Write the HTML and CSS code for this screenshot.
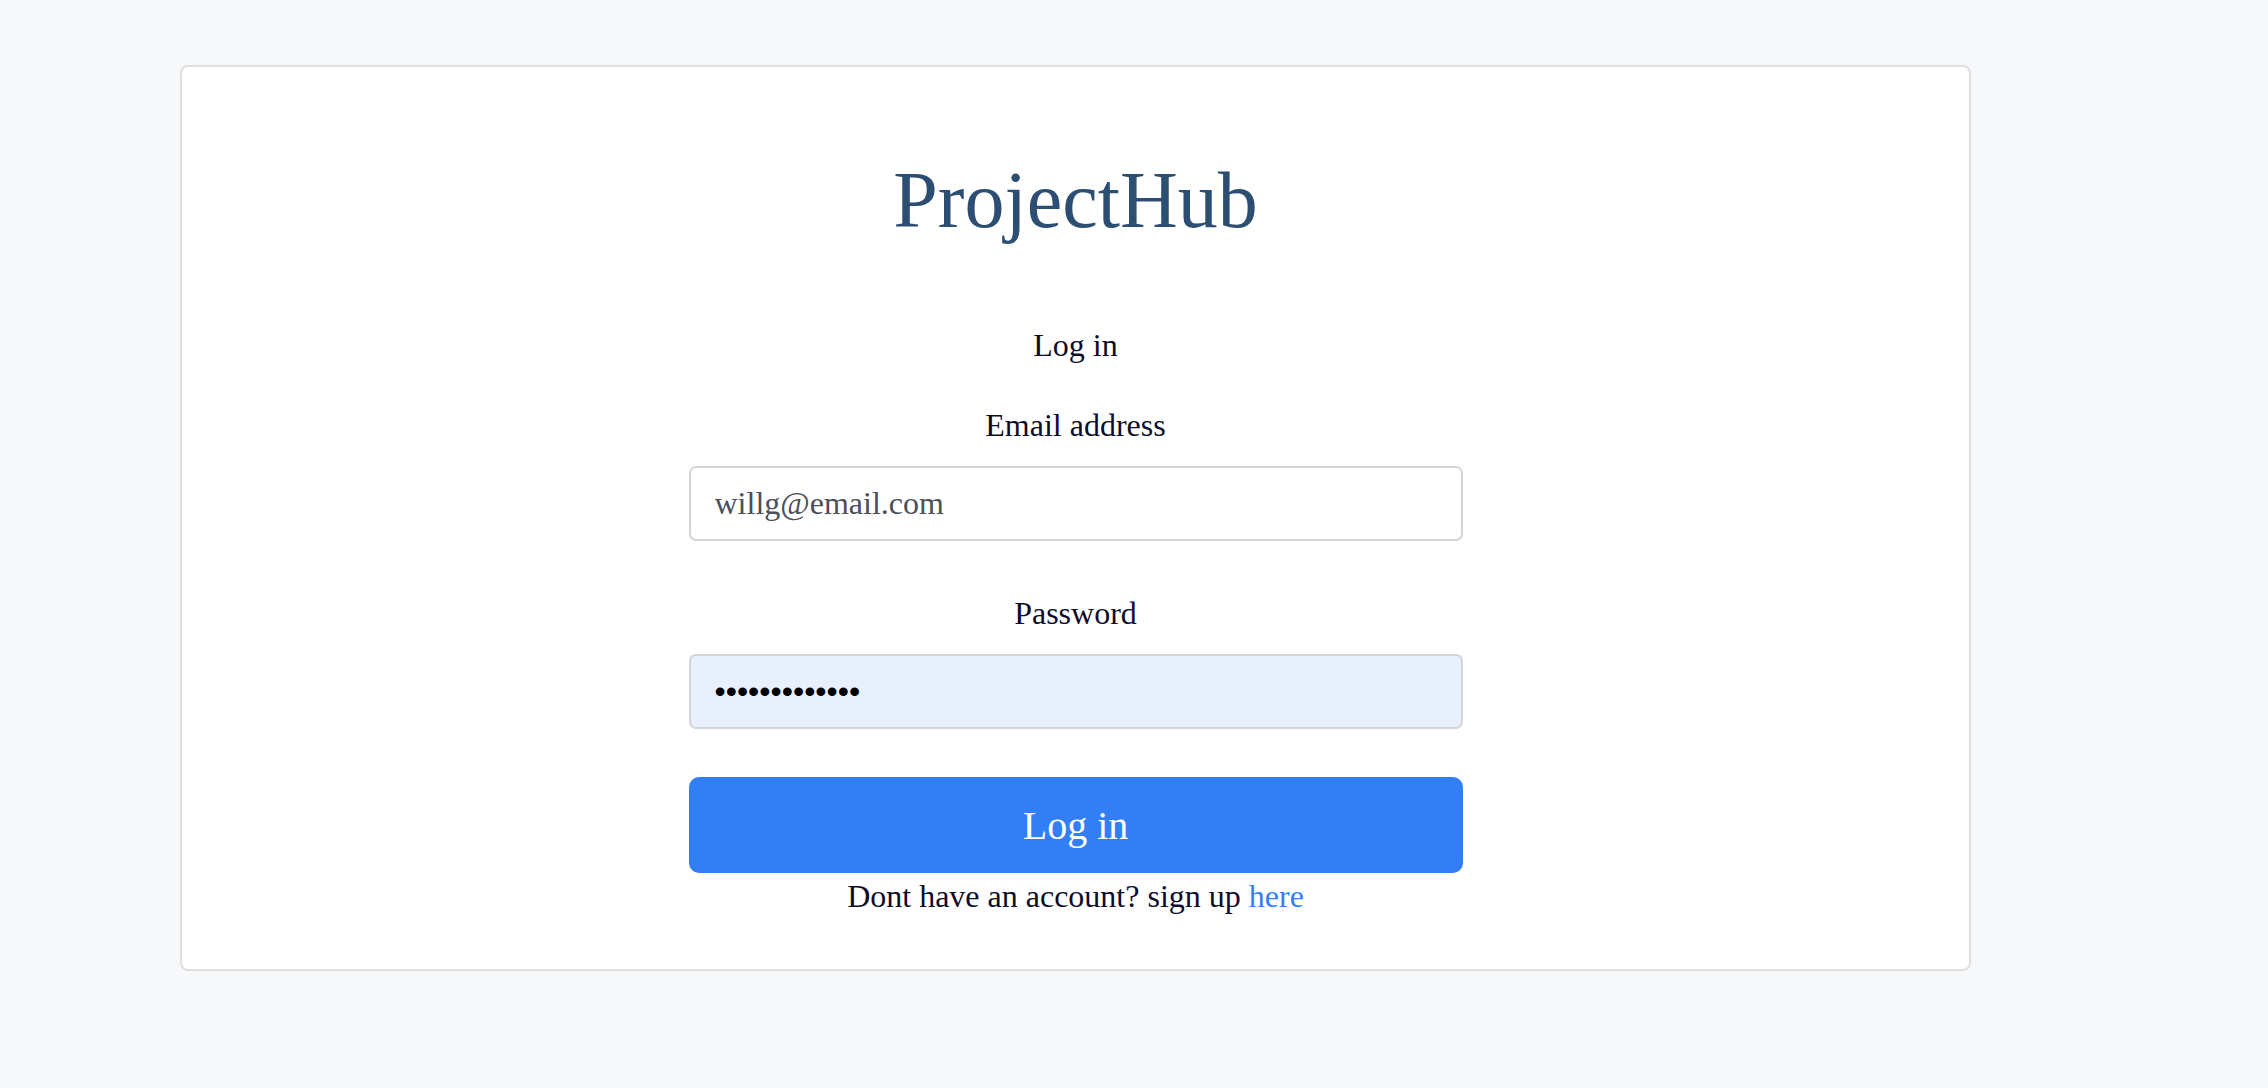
FILE: index.html
```html
<!DOCTYPE html>
<html lang="en">
<head>
<meta charset="utf-8">
<title>ProjectHub – Log in</title>
<link rel="stylesheet" href="styles.css">
</head>
<body>
  <main class="card">
    <h1 class="brand">ProjectHub</h1>
    <form class="login-form" onsubmit="return false;">
      <h2 class="form-title">Log in</h2>
      <div class="field">
        <label class="field-label" for="email">Email address</label>
        <input class="field-input" id="email" type="email" value="willg@email.com">
      </div>
      <div class="field field-password">
        <label class="field-label" for="password">Password</label>
        <input class="field-input field-autofill" id="password" type="password" value="password12345">
      </div>
      <button class="submit-btn" type="submit">Log in</button>
      <p class="signup-note">Dont have an account? sign up <a class="signup-link" href="#">here</a></p>
    </form>
  </main>
</body>
</html>
```
FILE: styles.css
```css
* {
  box-sizing: border-box;
}

html, body {
  margin: 0;
  padding: 0;
}

body {
  background: #f7f8fa;
  font-family: "Liberation Serif", "Times New Roman", serif;
  color: #0d0d2b;
  padding: 65px 0 0 180px;
}

.card {
  width: 1791px;
  height: 906px;
  background: #ffffff;
  border: 2px solid #dedfe1;
  border-radius: 8px;
  display: flex;
  flex-direction: column;
  align-items: center;
  padding-top: 85px;
}

.brand {
  margin: 0;
  font-weight: 400;
  font-size: 80px;
  line-height: 96px;
  color: #2c4e72;
}

.login-form {
  width: 774px;
  display: flex;
  flex-direction: column;
  align-items: center;
}

.form-title {
  margin: 79px 0 0;
  font-weight: 400;
  font-size: 32px;
  line-height: 36px;
}

.field {
  width: 100%;
  display: flex;
  flex-direction: column;
  align-items: center;
  margin-top: 44px;
}

.field-password {
  margin-top: 54px;
}

.field-label {
  font-size: 32px;
  line-height: 36px;
  margin-bottom: 23px;
}

.field-input {
  width: 100%;
  height: 75px;
  border: 2px solid #d2d5da;
  border-radius: 7px;
  background: #ffffff;
  padding: 0 24px;
  font-family: "Liberation Serif", "Times New Roman", serif;
  font-size: 32px;
  color: #4b5059;
  outline: none;
}

.field-autofill {
  background: #e8f0fe;
  color: #000000;
  font-family: "Liberation Sans", Arial, sans-serif;
  font-size: 32px;
}

.submit-btn {
  width: 100%;
  height: 96px;
  margin-top: 48px;
  border: none;
  border-radius: 10px;
  background: #327ef5;
  color: #ffffff;
  font-family: "Liberation Serif", "Times New Roman", serif;
  font-size: 40px;
  cursor: pointer;
}

.signup-note {
  margin: 5px 0 0;
  font-size: 32px;
  line-height: 36px;
}

.signup-link {
  color: #3380f6;
  text-decoration: none;
}
```
